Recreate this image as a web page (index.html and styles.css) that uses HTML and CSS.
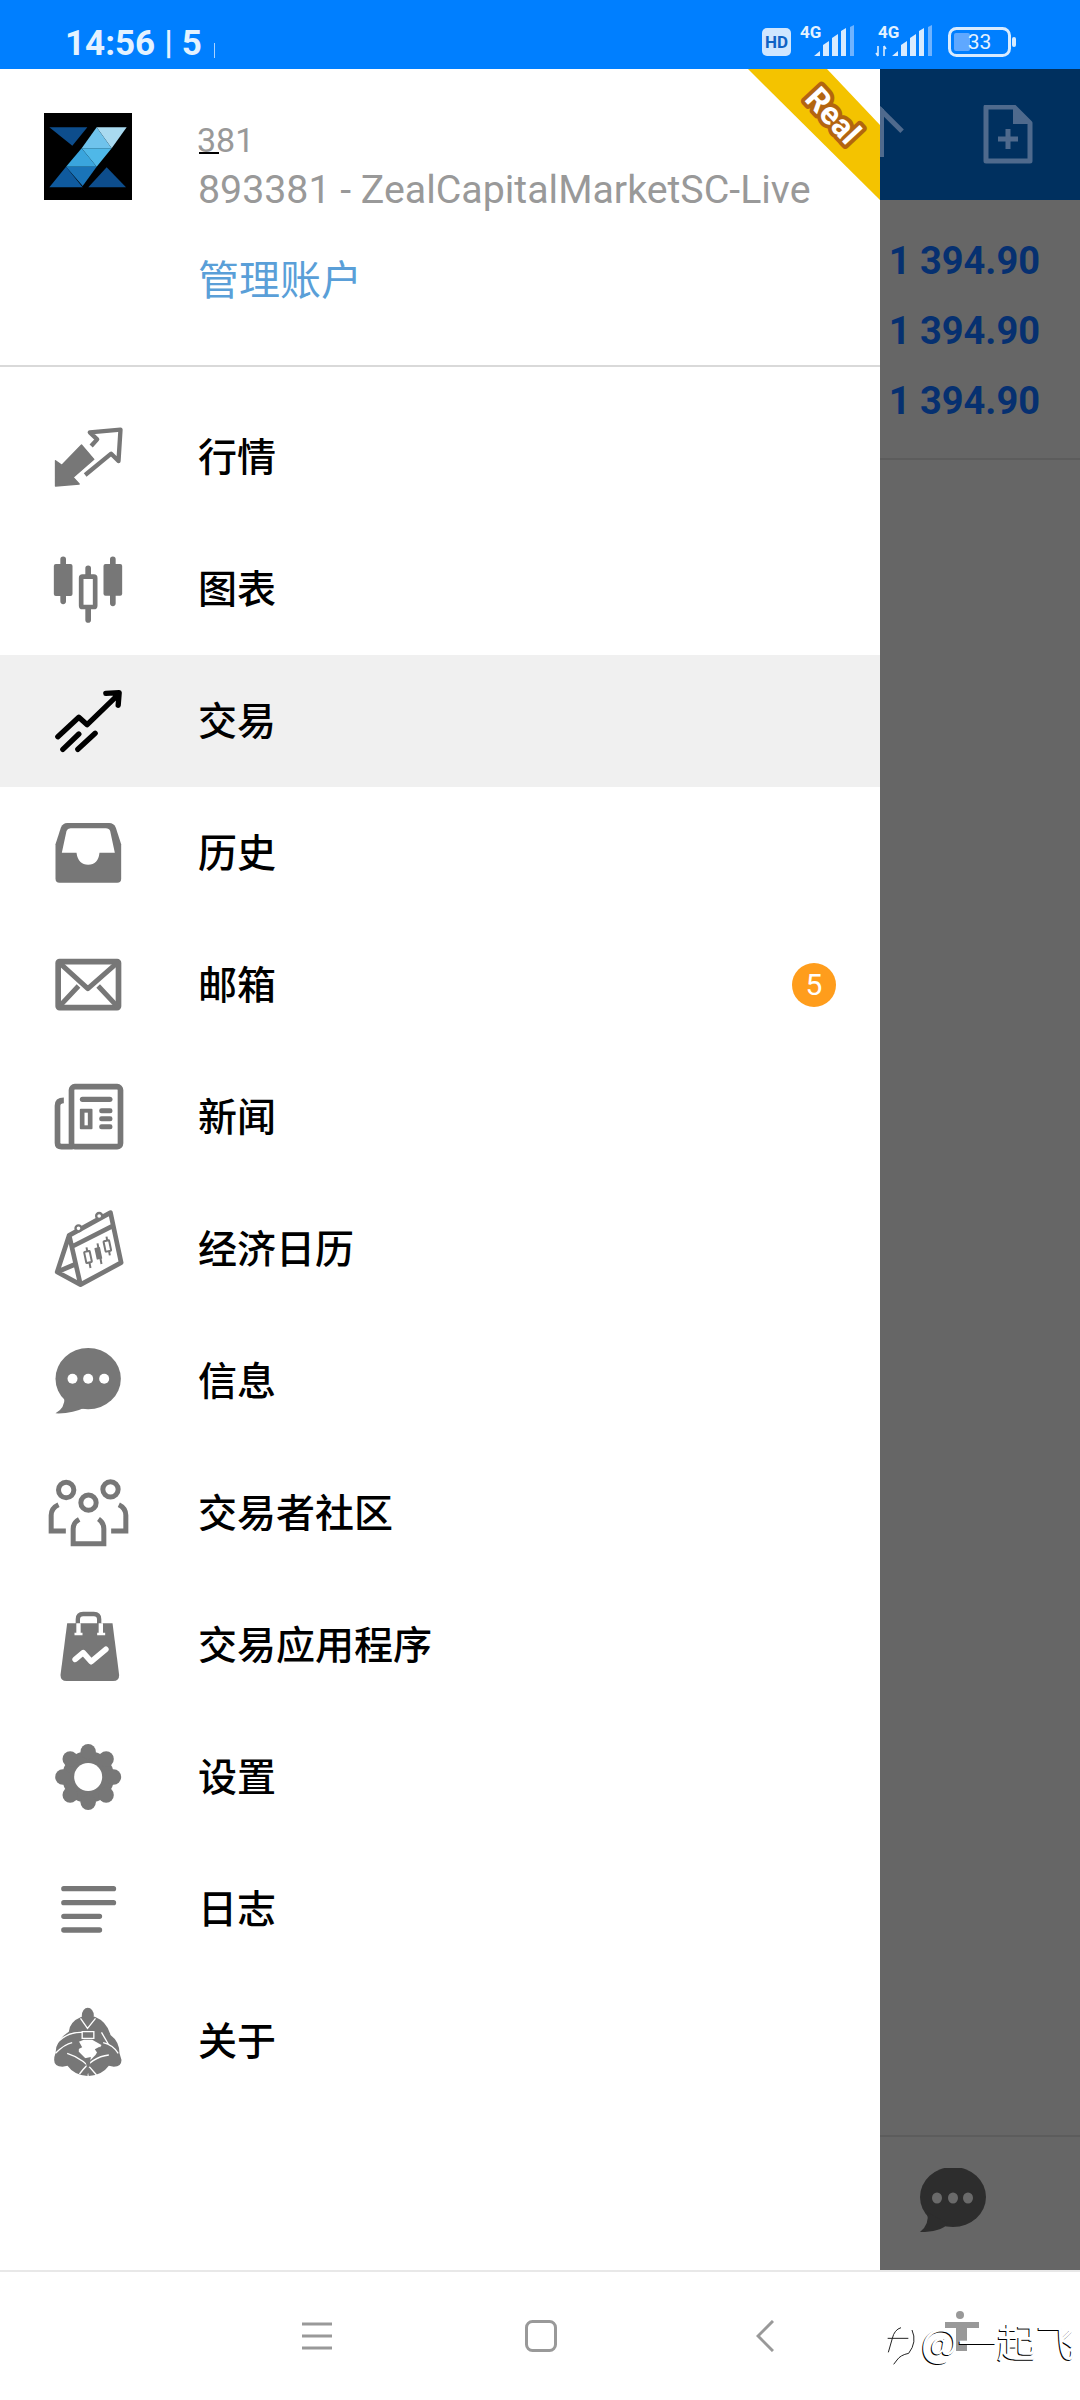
FILE: index.html
```html
<!DOCTYPE html>
<html lang="zh-CN">
<head>
<meta charset="utf-8">
<title>MetaTrader</title>
<link rel="stylesheet" href="styles.css">
</head>
<body>
<div class="phone">
  <header class="status">
    <div class="clock"><span>14:56</span><span class="clock-sep">|</span><span>5</span><i class="clock-tick"></i></div>
    <div class="status-icons">
      <svg class="hd" viewBox="0 0 29 28"><rect width="29" height="28" rx="5" fill="#cfe6ff"/><text x="14.5" y="20" text-anchor="middle" class="hd-text">HD</text></svg>
      <svg class="sig" viewBox="0 -8 56 40"><text x="0" y="13" class="g4">4G</text><path d="M14 31l6-5v5zM23 31V20l6-4v15zM32 31V13l6-4v22zM41 31V6l5-3v28z" fill="#d8ebff"/><path d="M50 31V2l4-2v31z" fill="#6fb3ff"/></svg>
      <svg class="sig sig2" viewBox="0 -8 60 40"><text x="3" y="13" class="g4">4G</text><path d="M3 21v10M1 28l2 3M9 31V21M11 24l-2-3" stroke="#d8ebff" stroke-width="1.6" fill="none"/><path d="M17 31l6-5v5zM26 31V20l6-4v15zM35 31V13l6-4v22zM44 31V6l5-3v28z" fill="#d8ebff"/><path d="M53 31V2l4-2v31z" fill="#6fb3ff"/></svg>
      <svg class="batt" viewBox="0 0 68 30"><rect x="1.5" y="1.5" width="60" height="27" rx="7" fill="none" stroke="#d8ebff" stroke-width="3"/><rect x="6" y="6" width="16" height="18" rx="2" fill="#5fa8ff"/><rect x="64" y="10" width="4" height="10" rx="2" fill="#d8ebff"/><text x="31.5" y="22" text-anchor="middle" class="batt-text">33</text></svg>
    </div>
  </header>

  <main class="main">
    <nav class="drawer">
      <section class="account">
        <svg class="logo" viewBox="12 9 264 261">
          <rect x="12" y="9" width="264" height="261" fill="#000"/>
          <path d="M28 52h114l-45 55z" fill="#0d4d8c"/>
          <path d="M28 232l50-62 50 62z" fill="#0f5a9e"/>
          <path d="M145 232l55-60 58 60z" fill="#0d4d8c"/>
          <path d="M170 52h90l-45 63z" fill="#a9daf0"/>
          <path d="M170 52l45 63h-90z" fill="#6fc3ec"/>
          <path d="M125 115h90l-45 55z" fill="#4fb8e8"/>
          <path d="M125 115l45 55H78z" fill="#3aa5dd"/>
          <path d="M78 170h92l-42 58z" fill="#1a74b8"/>
        </svg>
        <div class="account-text">
          <div class="acc-short">381<i class="acc-mark"></i></div>
          <div class="acc-name">893381 - ZealCapitalMarketSC-Live</div>
          <div class="acc-manage">管理账户</div>
        </div>
        <svg class="ribbon" viewBox="0 0 132 131">
          <path d="M0 0h79l53 56v75z" fill="#f4c300"/>
          <text x="0" y="0" transform="translate(77 54) rotate(47)" text-anchor="middle" class="ribbon-text">Real</text>
        </svg>
      </section>

      <ul class="menu">
        <li class="row">
          <svg class="ico" viewBox="112.5 21 300 300">
            <path d="M165 182v76l71-6-18-20 62-54-37-43-59 61z" fill="#777" stroke="#777" stroke-width="4" stroke-linejoin="round"/>
            <path d="M272 138l18-20-22-21 92-8-6 94-22-22-78 64" fill="none" stroke="#777" stroke-width="13" stroke-linejoin="round"/>
          </svg>
          <span class="label">行情</span>
        </li>
        <li class="row">
          <svg class="ico" viewBox="112.5 417 300 300">
            <path d="M188 478v126M263 505v155M337 478v132" stroke="#777" stroke-width="17" stroke-linecap="round"/>
            <rect x="160" y="492" width="56" height="96" rx="6" fill="#777"/>
            <rect x="309" y="492" width="56" height="95" rx="6" fill="#777"/>
            <rect x="242" y="530" width="42" height="91" rx="4" fill="#fff" stroke="#777" stroke-width="14"/>
          </svg>
          <span class="label">图表</span>
        </li>
        <li class="row row-active">
          <svg class="ico" viewBox="112.5 813 300 300">
            <path d="M172 1010l63-58 25 22 90-87M316 880l40-2-3 38M187 1048l48-46M232 1048l52-48" fill="none" stroke="#000" stroke-width="16" stroke-linecap="round" stroke-linejoin="round"/>
          </svg>
          <span class="label">交易</span>
        </li>
        <li class="row">
          <svg class="ico" viewBox="112.5 1209 300 300">
            <path d="M200 1269h126q14 0 20 14l16 50v103q0 12-12 12H177q-12 0-12-12v-103l16-50q6-14 19-14z" fill="#777"/>
            <path d="M210 1285h106q10 0 13 8l14 65h-46q-4 36-34 36t-35-36h-44l14-65q3-8 12-8z" fill="#fff"/>
          </svg>
          <span class="label">历史</span>
        </li>
        <li class="row">
          <svg class="ico" viewBox="112.5 105 300 300">
            <rect x="173" y="185" width="181" height="138" rx="4" fill="none" stroke="#777" stroke-width="17"/>
            <path d="M172 184l90 82 93-82M176 320l58-62M351 320l-58-62" fill="none" stroke="#777" stroke-width="15" stroke-linejoin="round"/>
          </svg>
          <span class="label">邮箱</span>
        </li>
        <li class="row">
          <svg class="ico" viewBox="112.5 501 300 300">
            <rect x="213" y="560" width="147" height="180" rx="10" fill="none" stroke="#777" stroke-width="17"/>
            <path d="M190 601q-19 0-19 16v112q0 11 12 11h34" fill="none" stroke="#777" stroke-width="17"/>
            <rect x="238" y="590" width="98" height="16" rx="8" fill="#777"/>
            <rect x="238" y="626" width="38" height="62" rx="3" fill="#777"/>
            <rect x="252" y="638" width="10" height="38" fill="#fff"/>
            <rect x="296" y="625" width="40" height="15" rx="7" fill="#777"/>
            <rect x="296" y="649" width="40" height="15" rx="7" fill="#777"/>
            <rect x="296" y="673" width="40" height="15" rx="7" fill="#777"/>
          </svg>
          <span class="label">新闻</span>
        </li>
        <li class="row">
          <svg class="ico" viewBox="112.5 897 300 300">
            <path d="M206 1006l124-68 32 150-122 66zM206 1006l-36 110 70 38M170 1116l56-24M218 1038l122-62" fill="none" stroke="#777" stroke-width="14" stroke-linejoin="round"/>
            <circle cx="234" cy="985" r="9" fill="#fff" stroke="#777" stroke-width="7"/>
            <circle cx="296" cy="948" r="9" fill="#fff" stroke="#777" stroke-width="7"/>
            <path d="M258 1042l12 62M291 1030l12 62M318 1010l10 56" stroke="#777" stroke-width="6"/>
            <rect x="254" y="1054" width="17" height="34" rx="2" transform="rotate(-12 262 1071)" fill="#fff" stroke="#777" stroke-width="6"/>
            <rect x="285" y="1042" width="17" height="36" rx="2" transform="rotate(-12 293 1060)" fill="#777"/>
            <rect x="312" y="1022" width="17" height="32" rx="2" transform="rotate(-12 320 1038)" fill="#fff" stroke="#777" stroke-width="6"/>
          </svg>
          <span class="label">经济日历</span>
        </li>
        <li class="row">
          <svg class="ico" viewBox="112.5 1293 300 300">
            <ellipse cx="263" cy="1436" rx="98" ry="92" fill="#777"/>
            <path d="M192 1490q2 34-27 50 50 2 90-18z" fill="#777"/>
            <circle cx="216" cy="1436" r="15" fill="#fff"/>
            <circle cx="263" cy="1436" r="15" fill="#fff"/>
            <circle cx="311" cy="1436" r="15" fill="#fff"/>
          </svg>
          <span class="label">信息</span>
        </li>
        <li class="row">
          <svg class="ico" viewBox="112.5 189 300 300">
            <g fill="none" stroke="#777" stroke-width="15">
              <circle cx="197" cy="270" r="23"/>
              <circle cx="330" cy="268" r="23"/>
              <circle cx="264" cy="308" r="23"/>
              <path d="M236 358q-18 10-18 28v45h92v-45q0-18-16-29M174 314q-22 10-22 32v47h44M355 314q21 10 21 32v47h-44"/>
            </g>
          </svg>
          <span class="label">交易者社区</span>
        </li>
        <li class="row">
          <svg class="ico" viewBox="112.5 585 300 300">
            <path d="M200 670h136l20 155q0 18-18 18H198q-18 0-18-18z" fill="#777"/>
            <path d="M232 672v-14q0-16 16-16h32q16 0 16 16v14" fill="none" stroke="#777" stroke-width="13"/>
            <path d="M234 670v30M301 670v30" stroke="#fff" stroke-width="13"/>
            <path d="M222 702h24M290 702h24" stroke="#fff" stroke-width="8"/>
            <path d="M224 778l24-20 24 27 44-37" fill="none" stroke="#fff" stroke-width="17" stroke-linecap="round" stroke-linejoin="round"/>
          </svg>
          <span class="label">交易应用程序</span>
        </li>
        <li class="row">
          <svg class="ico" viewBox="112.5 981 300 300">
            <g fill="#777">
              <circle cx="263" cy="1131" r="78"/>
              <circle cx="263" cy="1055" r="23"/>
              <circle cx="263" cy="1207" r="23"/>
              <circle cx="187" cy="1131" r="23"/>
              <circle cx="339" cy="1131" r="23"/>
              <circle cx="209" cy="1077" r="23"/>
              <circle cx="317" cy="1077" r="23"/>
              <circle cx="209" cy="1185" r="23"/>
              <circle cx="317" cy="1185" r="23"/>
            </g>
            <circle cx="263" cy="1131" r="42" fill="#fff"/>
          </svg>
          <span class="label">设置</span>
        </li>
        <li class="row">
          <svg class="ico" viewBox="112.5 177 300 300">
            <path d="M190 266h149M190 308h149M190 349h107M190 390h107" stroke="#777" stroke-width="16" stroke-linecap="round"/>
          </svg>
          <span class="label">日志</span>
        </li>
        <li class="row">
          <svg class="ico" viewBox="-22.500 -27 300 300">
            <g fill="#777">
              <ellipse cx="127" cy="47" rx="18" ry="24"/>
              <path d="M70 95q2-30 38-45h40q37 15 47 55 27 20 27 55l6 20q0 20-23 20l-15-3q-20 28-60 31-2-6-2-10-2 4-2 10-40-3-60-31l-15 3q-25 0-25-20 0-10 4-20 0-40 40-65z"/>
            </g>
            <g fill="none" stroke="#fff">
              <path d="M105 55l21 30 24-30M110 95h35v20h-35zM25 140q35-45 83-43M190 135l-22-38M30 160q28-28 50-32M218 160q-15-25-45-32M65 160q50 15 88 65M190 165q-50 5-88 57" stroke-width="4"/>
            </g>
            <path d="M100 125l15-6h25l28 16-18 30-20 20-30-30z" fill="#fff"/>
            <path d="M88 130l12-6 10 18-12 6zM148 148l14-8 8 12-14 8zM118 175l18-4-4 30-8 0z" fill="#777"/>
          </svg>
          <span class="label">关于</span>
        </li>
      </ul>
      <span class="badge">5</span>
    </nav>

    <aside class="behind">
      <div class="behind-bar">
        <svg class="behind-bar-icon" viewBox="0 0 50 60"><path d="M3 2h28l16 16v38H3z" fill="none" stroke="#4f6a8d" stroke-width="5" stroke-linejoin="round"/><path d="M30 2l17 17H30z" fill="#4f6a8d"/><path d="M25 24v20M15 34h20" stroke="#4f6a8d" stroke-width="5"/></svg>
      </div>
      <div class="prices">
        <div class="price">1 394.90</div>
        <div class="price">1 394.90</div>
        <div class="price">1 394.90</div>
      </div>
      <div class="behind-foot">
        <svg class="chat" viewBox="0 0 66 66"><ellipse cx="33" cy="29" rx="33" ry="30" fill="#2d2d2d"/><path d="M7 44q3 12-7 20 20 0 28-8z" fill="#2d2d2d"/><g fill="#6a6a6a"><ellipse cx="17" cy="30" rx="5" ry="5.500"/><ellipse cx="33" cy="30" rx="5" ry="5.500"/><ellipse cx="48" cy="30" rx="5" ry="5.500"/></g></svg>
      </div>
    </aside>
  </main>

  <footer class="navbar">
    <div class="nav-slot"><svg class="nav-menu" viewBox="0 0 30 28"><path d="M0 2h30M0 14h30M0 26h30" stroke="#999" stroke-width="3.200"/></svg></div>
    <div class="nav-slot"><svg class="nav-home" viewBox="0 0 32 32"><rect x="1.500" y="1.500" width="29" height="29" rx="6" fill="none" stroke="#999" stroke-width="3"/></svg></div>
    <div class="nav-slot"><svg class="nav-back" viewBox="0 0 18 32"><path d="M17 1L2 16l15 15" fill="none" stroke="#999" stroke-width="3"/></svg></div>
    <div class="watermark">
      <svg class="wm-logo" viewBox="20 100 90 120"><path d="M62 108q-20 6-26 32l-12 42M22 140h62M95 115q16 36-10 70-25 5-35 20l-10 13" fill="none" stroke="#222" stroke-width="3"/></svg>
      <svg class="wm-person" viewBox="0 0 34 40"><circle cx="15" cy="4" r="4" fill="#999"/><path d="M0 11h34v6H22v23H11V17H0z" fill="#999"/></svg>
      <span class="wm-text">@一起飞</span>
    </div>
  </footer>
</div>
</body>
</html>
```

FILE: styles.css
```css
* { box-sizing: border-box; }
html, body { margin: 0; padding: 0; background: #fff; }
body { font-family: "Noto Sans CJK SC", Roboto, sans-serif; }

.phone { width: 1080px; height: 2400px; display: flex; flex-direction: column; overflow: hidden; }

.status { height: 69px; flex: none; background: #007fff; display: flex; align-items: center; justify-content: space-between; padding: 0 64px 0 65px; }
.clock { font-family: Roboto, sans-serif; font-weight: 700; font-size: 35px; color: #e4f2ff; display: flex; align-items: center; gap: 9px; padding-top: 17px; }
.clock-sep { font-size: 34px; margin-top: -2px; }
.clock-tick { width: 1px; height: 15px; background: #a9d2ff; margin: 14px 0 0 3px; }
.status-icons { display: flex; align-items: center; padding-top: 13px; }
.hd { width: 29px; height: 28px; margin-top: 2px; margin-right: 9px; }
.hd-text { font: 700 17px Roboto, sans-serif; fill: #0f62c4; }
.sig { width: 56px; height: 40px; margin-top: -8px; }
.sig2 { width: 60px; margin-left: 19px; margin-right: 13px; }
.g4 { font: 700 17px Roboto, sans-serif; fill: #e4f2ff; }
.batt { width: 68px; height: 30px; margin-top: 2px; }
.batt-text { font: 400 21px Roboto, sans-serif; fill: #e4f2ff; }

.main { height: 2201px; flex: none; display: flex; }

.drawer { width: 880px; flex: none; background: #fff; position: relative; }
.account { height: 298px; display: flex; align-items: flex-start; padding: 44px 0 0 44px; border-bottom: 2px solid #d9d9d9; position: relative; }
.logo { width: 88px; height: 87px; flex: none; }
.account-text { margin-left: 67px; }
.acc-short { font: 400 34px/40px Roboto, sans-serif; color: #999; margin: 7px 0 0 -2px; position: relative; width: 60px; }
.acc-mark { position: absolute; left: 2px; bottom: 6px; width: 20px; height: 2px; background: #000; }
.acc-name { font: 400 39.300px/44px Roboto, sans-serif; color: #999; margin-top: 8px; margin-left: -1px; white-space: nowrap; }
.acc-manage { font-size: 41px; line-height: 48px; color: #5a9fd8; margin-left: -1px; margin-top: 41px; }
.ribbon { position: absolute; top: 0; right: 0; width: 132px; height: 131px; }
.ribbon-text { font: 700 32px Roboto, sans-serif; fill: #fff; stroke: #b3650f; stroke-width: 8px; paint-order: stroke; stroke-linejoin: round; }

.menu { list-style: none; margin: 0; padding: 24px 0 0; }
.row { height: 132px; display: flex; align-items: center; padding-left: 38px; gap: 60px; }
.row-active { background: #f0f0f0; }
.ico { width: 100px; height: 100px; flex: none; }
.label { font-size: 39px; font-weight: 500; color: #000; line-height: 1; margin-bottom: 5px; }
.badge { position: absolute; left: 792px; top: 894px; width: 44px; height: 44px; border-radius: 50%; background: #ff9d1c; color: #fff; font: 400 30px/44px Roboto, sans-serif; text-align: center; }

.behind { flex: 1; background: #666; display: flex; flex-direction: column; overflow: hidden; }
.behind-bar { height: 131px; flex: none; background: #00305f; padding: 36px 0 0 103px; position: relative; }
.behind-bar::before { content: ""; position: absolute; left: -16px; top: 44px; width: 28px; height: 28px; border-top: 5px solid #4f6a8d; border-right: 5px solid #4f6a8d; transform: rotate(-45deg); }
.behind-bar::after { content: ""; position: absolute; left: 0; top: 40px; width: 4px; height: 48px; background: #4f6a8d; }
.behind-bar-icon { width: 50px; height: 60px; display: block; }
.prices { height: 260px; flex: none; border-bottom: 2px solid #5c5c5c; padding-top: 26px; }
.price { font: 700 38px/70px Roboto, sans-serif; color: #063070; text-align: right; padding-right: 40px; white-space: nowrap; }
.behind-foot { margin-top: auto; height: 135px; border-top: 2px solid #5c5c5c; padding: 31px 0 0 40px; }
.chat { width: 66px; height: 66px; display: block; }

.navbar { height: 130px; flex: none; background: #fff; border-top: 2px solid #e8e8e8; display: flex; align-items: center; padding: 0 0 0 205px; position: relative; }
.nav-slot { width: 224px; display: flex; justify-content: center; }
.nav-menu { width: 30px; height: 28px; display: block; }
.nav-home { width: 32px; height: 32px; display: block; }
.nav-back { width: 18px; height: 32px; display: block; }

.watermark { position: absolute; left: 887px; top: 38px; width: 190px; height: 60px; }
.wm-logo { position: absolute; left: 0; top: 15px; width: 30px; height: 40px; }
.wm-person { position: absolute; left: 58px; top: 1px; width: 34px; height: 40px; }
.wm-text { position: absolute; left: 34px; top: 2px; font-size: 39px; line-height: 56px; color: #fff; text-shadow: -1px 1px 0 #000; white-space: nowrap; }
```
